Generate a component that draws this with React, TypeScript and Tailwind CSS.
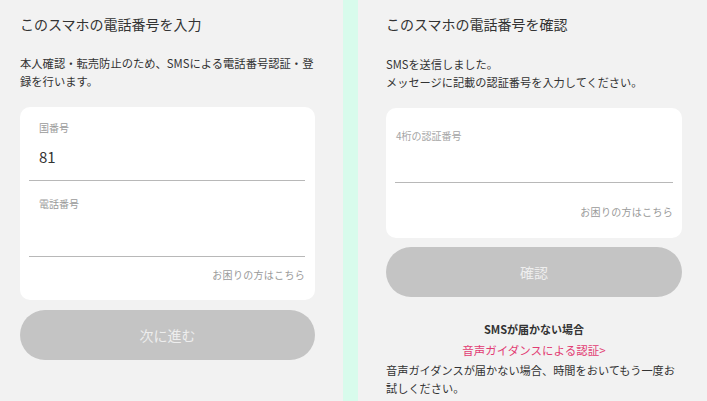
const font = '"Noto Sans CJK JP", "Noto Sans", sans-serif'

function Help() {
  return (
    <p className="text-right text-[10px] leading-[14px] tracking-[0.3px] text-[#9a9a9a]">
      お困りの方はこちら
    </p>
  )
}

function PillButton({ label }: { label: string }) {
  return (
    <button className="flex h-[50px] w-full items-center justify-center rounded-full bg-[#c4c4c4] text-[14px] text-[#eeeeee]">
      {label}
    </button>
  )
}

export default function App() {
  return (
    <div className="flex h-[401px] w-[707px] overflow-hidden bg-[#f2f2f2] text-[#333333]" style={{ fontFamily: font }}>
      {/* step 1: enter phone number */}
      <div className="flex w-[343px] shrink-0 flex-col pl-[20px] pt-[14px]">
        <h1 className="text-[14px] leading-[20px]">このスマホの電話番号を入力</h1>
        <p className="mt-[21px] w-[300px] text-[11.3px] leading-[17.5px]">
          本人確認・転売防止のため、SMSによる電話番号認証・登録を行います。
        </p>
        <div className="mt-[17px] w-[295px] rounded-[10px] bg-white pb-[18px] pl-[9px] pr-[10px]">
          <div className="border-b-[1.5px] border-[#b8b8b8] pb-[13px] pt-[14px]">
            <p className="pl-[10px] text-[10px] leading-[14px] text-[#9a9a9a]">国番号</p>
            <p className="mt-[12px] pl-[10px] text-[15px] leading-[20px]">81</p>
          </div>
          <div className="border-b-[1.5px] border-[#b8b8b8] pb-[45px] pt-[16px]">
            <p className="pl-[10px] text-[10px] leading-[14px] text-[#9a9a9a]">電話番号</p>
          </div>
          <div className="mt-[11px]">
            <Help />
          </div>
        </div>
        <div className="mt-[10px] w-[295px]">
          <PillButton label="次に進む" />
        </div>
      </div>

      <div className="w-[15px] shrink-0 bg-[#d8fbec]" />

      {/* step 2: confirm code */}
      <div className="flex flex-1 flex-col pl-[28px] pt-[14px]">
        <h1 className="text-[14px] leading-[20px]">このスマホの電話番号を確認</h1>
        <p className="mt-[21px] text-[11.2px] leading-[18px]">
          SMSを送信しました。
          <br />
          メッセージに記載の認証番号を入力してください。
        </p>
        <div className="mt-[17px] w-[296px] rounded-[10px] bg-white pb-[19px] pl-[9px] pr-[9px]">
          <div className="border-b-[1.5px] border-[#b8b8b8] pb-[39px] pt-[21px]">
            <p className="pl-[1px] text-[10px] leading-[14px] text-[#a5a5a5]">4桁の認証番号</p>
          </div>
          <div className="mt-[22px]">
            <Help />
          </div>
        </div>
        <div className="mt-[9px] w-[296px]">
          <PillButton label="確認" />
        </div>
        <div className="w-[296px]">
          <p className="mt-[23px] text-center text-[11px] font-bold leading-[18px]">SMSが届かない場合</p>
          <p className="mt-[3px] text-center text-[11.5px] leading-[18px] text-[#e23d74]">音声ガイダンスによる認証&gt;</p>
          <p className="mt-[2px] text-[11.2px] leading-[18px]">
            音声ガイダンスが届かない場合、時間をおいてもう一度お試しください。
          </p>
        </div>
      </div>
    </div>
  )
}
